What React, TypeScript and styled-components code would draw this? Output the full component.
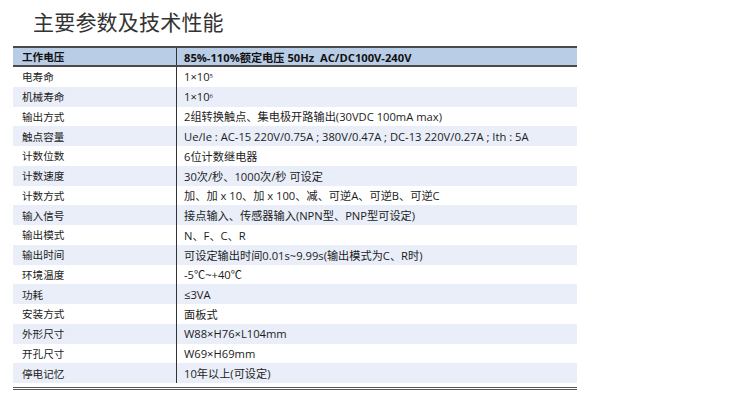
import React from "react";
import styled, { createGlobalStyle } from "styled-components";

const GlobalStyle = createGlobalStyle`
  html, body {
    margin: 0;
    padding: 0;
    background: #ffffff;
  }
  body {
    width: 750px;
    height: 399px;
    overflow: hidden;
    font-family: "Open Sans", "Noto Sans CJK SC", sans-serif;
  }
`;

const Page = styled.div`
  width: 750px;
  height: 399px;
  display: flex;
  flex-direction: column;
  box-sizing: border-box;
`;

const Title = styled.h1`
  margin: 0;
  height: 46px;
  box-sizing: border-box;
  padding: 11px 0 0 33px;
  font-family: "Noto Sans CJK SC", sans-serif;
  font-size: 21px;
  line-height: 21px;
  font-weight: 400;
  color: #333333;
  letter-spacing: 0.2px;
`;

const Table = styled.div`
  margin-left: 13px;
  width: 564px;
  display: flex;
  flex-direction: column;
  padding-bottom: 4px;
  border-bottom: 3px double #555555;
  box-sizing: border-box;
`;

const HeaderRow = styled.div`
  display: grid;
  grid-template-columns: 164px 1fr;
  height: 21px;
  box-sizing: border-box;
  background: #b9cde6;
  border-top: 2px solid #4a4a4a;
  border-bottom: 2px solid #4a4a4a;
  font-weight: 700;
  color: #111111;
`;

const Row = styled.div<{ $striped: boolean }>`
  display: grid;
  grid-template-columns: 164px 1fr;
  height: 19.75px;
  background: ${(p) => (p.$striped ? "#e9eef8" : "#ffffff")};
  color: #1c1c1c;
`;

const LabelCell = styled.div`
  display: flex;
  align-items: center;
  padding-left: 9px;
  border-right: 1px solid #333333;
  font-size: 10.6px;
  white-space: nowrap;
`;

const ValueCell = styled.div`
  display: flex;
  align-items: center;
  padding-left: 7px;
  font-size: 11.2px;
  white-space: nowrap;
`;

const Sup = styled.sup`
  font-size: 6px;
  line-height: 0;
  position: relative;
  top: -1px;
  vertical-align: super;
`;

const rows: [string, React.ReactNode][] = [
  ["电寿命", <>1×10<Sup>5</Sup></>],
  ["机械寿命", <>1×10<Sup>6</Sup></>],
  ["输出方式", "2组转换触点、集电极开路输出(30VDC 100mA max)"],
  ["触点容量", "Ue/Ie : AC-15 220V/0.75A ; 380V/0.47A ; DC-13 220V/0.27A ; Ith : 5A"],
  ["计数位数", "6位计数继电器"],
  ["计数速度", "30次/秒、1000次/秒 可设定"],
  ["计数方式", "加、加 x 10、加 x 100、减、可逆A、可逆B、可逆C"],
  ["输入信号", "接点输入、传感器输入(NPN型、PNP型可设定)"],
  ["输出模式", "N、F、C、R"],
  ["输出时间", "可设定输出时间0.01s~9.99s(输出模式为C、R时)"],
  ["环境温度", "-5℃~+40℃"],
  ["功耗", "≤3VA"],
  ["安装方式", "面板式"],
  ["外形尺寸", "W88×H76×L104mm"],
  ["开孔尺寸", "W69×H69mm"],
  ["停电记忆", "10年以上(可设定)"],
];

export default function App() {
  return (
    <>
      <GlobalStyle />
      <Page>
        <Title>主要参数及技术性能</Title>
        <Table>
          <HeaderRow>
            <LabelCell>工作电压</LabelCell>
            <ValueCell>85%-110%额定电压 50Hz&nbsp;&nbsp;AC/DC100V-240V</ValueCell>
          </HeaderRow>
          {rows.map(([label, value], i) => (
            <Row key={label} $striped={i % 2 === 1}>
              <LabelCell>{label}</LabelCell>
              <ValueCell>{value}</ValueCell>
            </Row>
          ))}
        </Table>
      </Page>
    </>
  );
}
